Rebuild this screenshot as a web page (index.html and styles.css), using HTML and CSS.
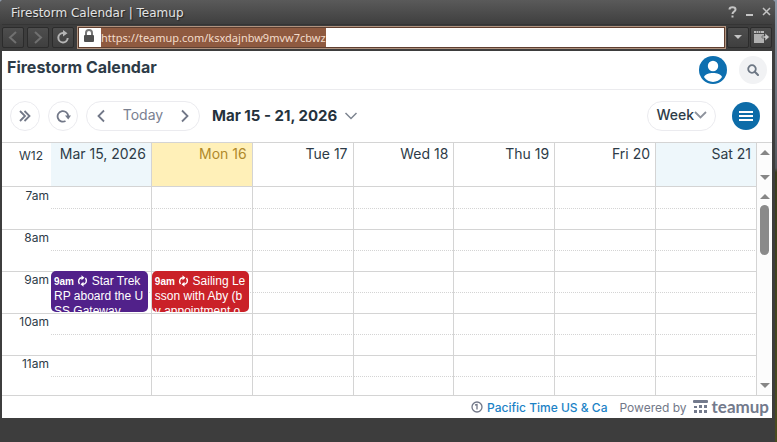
FILE: index.html
```html
<!DOCTYPE html>
<html lang="en">
<head>
    <meta charset="UTF-8">
    <meta name="viewport" content="width=device-width, initial-scale=1.0">
    <title>Firestorm Calendar | Teamup</title>
    <link rel="stylesheet" href="styles.css">
</head>
<body>
    <div class="window">
        <!-- Viewer window frame -->
        <div class="titlebar">
            <span class="titlebar-text">Firestorm Calendar | Teamup</span>
            <button class="win-btn" aria-label="Help">
                <svg width="9" height="12" viewBox="0 0 9 12"><path d="M1.500 3.500C1.500 0.500 7.500 0.500 7.500 3.500C7.500 5.500 4.500 5.500 4.500 8M4.500 9.500V11.500" fill="none" stroke="#c4c4c4" stroke-width="2"/></svg>
            </button>
            <button class="win-btn" aria-label="Minimize">
                <svg width="9" height="12" viewBox="0 0 9 12"><path d="M1 9H8" stroke="#c4c4c4" stroke-width="2"/></svg>
            </button>
            <button class="win-btn" aria-label="Close">
                <svg width="9" height="12" viewBox="0 0 9 12"><path d="M1 2L8 9M8 2L1 9" stroke="#c4c4c4" stroke-width="1.500"/></svg>
            </button>
        </div>

        <div class="navbar">
            <div class="nav-group">
                <button class="nav-btn" aria-label="Back">
                    <svg width="12" height="14" viewBox="0 0 12 14"><path d="M9 2L3 7.500L9 13" fill="none" stroke="#707070" stroke-width="2"/></svg>
                </button>
                <button class="nav-btn" aria-label="Forward">
                    <svg width="12" height="14" viewBox="0 0 12 14"><path d="M3 2L9 7.500L3 13" fill="none" stroke="#707070" stroke-width="2"/></svg>
                </button>
                <button class="nav-btn" aria-label="Reload">
                    <svg width="14" height="14" viewBox="0 0 14 14"><path d="M7.500 3H7A4.700 4.700 0 1 0 11.700 8" fill="none" stroke="#b5b5b5" stroke-width="2"/><path d="M7 0L11.500 3.200L7 6.500Z" fill="#b5b5b5"/></svg>
                </button>
            </div>
            <div class="address">
                <svg class="lock" width="12" height="14" viewBox="0 0 12 14"><path d="M3 7V4A3 3 0 0 1 9 4V7" fill="none" stroke="#777" stroke-width="2"/><rect x="1" y="6" width="10" height="7" rx="1" fill="#505050"/></svg>
                <input class="url" type="text" aria-label="Address" value="https://teamup.com/ksxdajnbw9mvw7cbwz">
            </div>
            <div class="nav-group nav-end">
                <button class="nav-btn" aria-label="History">
                    <svg width="10" height="6" viewBox="0 0 10 6"><path d="M1 1H9L5 5Z" fill="#c4c4c4"/></svg>
                </button>
                <button class="nav-btn" aria-label="Open in external browser">
                    <svg width="17" height="14" viewBox="0 0 17 14"><rect x="1" y="1" width="10" height="2" fill="#b8b8b8"/><path d="M3 2H4M5 2H6M7 2H8" stroke="#444"/><rect x="1" y="4" width="10" height="9" fill="#b0b0b0"/><path d="M9 6H12V3L16.500 7L12 11V8H9Z" fill="#c8c8c8" stroke="#484848" stroke-width="0.600"/></svg>
                </button>
            </div>
        </div>

        <div class="page">
            <header class="header">
                <h1>Firestorm Calendar</h1>
                <button class="avatar" aria-label="Account">
                    <svg width="28" height="28" viewBox="0 0 28 28"><circle cx="14" cy="14" r="14" fill="#0d6fb0"/><circle cx="14" cy="10" r="5.200" fill="#fff"/><path d="M5 21C7 15.800 21 15.800 23 21C18.500 27.500 9.500 27.500 5 21Z" fill="#fff"/></svg>
                </button>
                <button class="search" aria-label="Search">
                    <svg width="12" height="12" viewBox="0 0 12 12"><circle cx="5" cy="5" r="3.800" fill="none" stroke="#6d7784" stroke-width="1.800"/><path d="M7.800 7.800L11 11" stroke="#6d7784" stroke-width="2" stroke-linecap="round"/></svg>
                </button>
            </header>

            <div class="toolbar">
                <button class="round" aria-label="Show sidebar">
                    <svg width="14" height="14" viewBox="0 0 14 14"><path d="M2 2L7 7L2 12M6.500 2L11.500 7L6.500 12" fill="none" stroke="#727888" stroke-width="1.800"/></svg>
                </button>
                <button class="round" aria-label="Refresh">
                    <svg width="15" height="14" viewBox="0 0 15 14"><path d="M9.500 12A5.300 5.300 0 1 1 12.200 7.500" fill="none" stroke="#727888" stroke-width="1.800"/><path d="M9 6.500H15L12.200 10.500Z" fill="#727888"/></svg>
                </button>
                <div class="pager">
                    <button aria-label="Previous week">
                        <svg width="10" height="14" viewBox="0 0 10 14"><path d="M8 1.500L2.500 7L8 12.500" fill="none" stroke="#727888" stroke-width="1.800"/></svg>
                    </button>
                    <button class="today-btn">Today</button>
                    <button aria-label="Next week">
                        <svg width="10" height="14" viewBox="0 0 10 14"><path d="M2 1.500L7.500 7L2 12.500" fill="none" stroke="#727888" stroke-width="1.800"/></svg>
                    </button>
                </div>
                <button class="range">
                    Mar 15 - 21, 2026
                    <svg width="14" height="8" viewBox="0 0 14 8"><path d="M1.500 1L7 6.500L12.500 1" fill="none" stroke="#7d8490" stroke-width="1.500"/></svg>
                </button>
                <button class="view">
                    Week
                    <svg width="14" height="8" viewBox="0 0 14 8"><path d="M1 1L6.500 6.500L12 1" fill="none" stroke="#8d929c" stroke-width="1.800"/></svg>
                </button>
                <button class="menu" aria-label="Menu">
                    <svg width="14" height="12" viewBox="0 0 14 12"><path d="M0 2H14M0 6H14M0 10H14" stroke="#fff" stroke-width="2"/></svg>
                </button>
            </div>

            <div class="calendar">
                <table class="week">
                    <thead>
                        <tr>
                            <th class="week-no" scope="col">W12</th>
                            <th class="weekend" scope="col">Mar 15, 2026</th>
                            <th class="today" scope="col">Mon 16</th>
                            <th scope="col">Tue 17</th>
                            <th scope="col">Wed 18</th>
                            <th scope="col">Thu 19</th>
                            <th scope="col">Fri 20</th>
                            <th class="weekend" scope="col">Sat 21</th>
                        </tr>
                    </thead>
                    <tbody>
                        <tr><th scope="row">7am</th><td></td><td></td><td></td><td></td><td></td><td></td><td></td></tr>
                        <tr><th scope="row">8am</th><td></td><td></td><td></td><td></td><td></td><td></td><td></td></tr>
                        <tr>
                            <th scope="row">9am</th>
                            <td>
                                <div class="event purple"><b>9am</b> <svg width="11" height="12" viewBox="0 0 11 12"><path d="M2.500 9C0.500 6 2 2.800 5 2.800M8.500 3C10.500 6 9 9.200 6 9.200" fill="none" stroke="#fff" stroke-width="1.400"/><path d="M4.500 0.300L7.500 2.800L4.500 5.300ZM6.500 6.700L3.500 9.200L6.500 11.700Z" fill="#fff"/></svg> Star Trek RP aboard the USS Gateway</div>
                            </td>
                            <td>
                                <div class="event red"><b>9am</b> <svg width="11" height="12" viewBox="0 0 11 12"><path d="M2.500 9C0.500 6 2 2.800 5 2.800M8.500 3C10.500 6 9 9.200 6 9.200" fill="none" stroke="#fff" stroke-width="1.400"/><path d="M4.500 0.300L7.500 2.800L4.500 5.300ZM6.500 6.700L3.500 9.200L6.500 11.700Z" fill="#fff"/></svg> Sailing Lesson with Aby (by appointment o</div>
                            </td>
                            <td></td><td></td><td></td><td></td><td></td>
                        </tr>
                        <tr><th scope="row">10am</th><td></td><td></td><td></td><td></td><td></td><td></td><td></td></tr>
                        <tr><th scope="row">11am</th><td></td><td></td><td></td><td></td><td></td><td></td><td></td></tr>
                    </tbody>
                </table>
                <div class="scrollbars">
                    <div class="scroll scroll-head">
                        <span class="arrow-up"></span>
                        <span class="arrow-down"></span>
                    </div>
                    <div class="scroll scroll-body">
                        <span class="arrow-up"></span>
                        <span class="thumb"></span>
                        <span class="arrow-down"></span>
                    </div>
                </div>
            </div>

            <footer class="footer">
                <a class="timezone" href="#">
                    <svg width="12" height="12" viewBox="0 0 12 12"><circle cx="6" cy="6" r="5" fill="none" stroke="#727888" stroke-width="1.300"/><path d="M4 4L6 3.500V8.500" fill="none" stroke="#727888" stroke-width="1.300"/></svg>
                    Pacific Time US &amp; Ca
                </a>
                <span>Powered by</span>
                <a class="brand" href="#">
                    <svg width="15" height="14" viewBox="0 0 15 14" fill="#737a8c"><rect x="0" y="0" width="15" height="3" rx="1"/><rect x="6" y="5" width="3" height="3"/><rect x="11" y="5" width="3" height="3"/><rect x="1" y="6" width="3" height="2"/><rect x="1" y="10" width="3" height="3"/><rect x="6" y="10" width="3" height="3"/><rect x="11" y="10" width="3" height="3"/></svg>
                    teamup
                </a>
            </footer>
        </div>
    </div>
</body>
</html>
```

FILE: styles.css
```css
* {
    box-sizing: border-box;
}
body {
    margin: 0;
    padding-right: 2px;
    background: linear-gradient(#8d99a8, #55585c 38%, #3b3d1c 39%, #4a4c20);
    font-family: Inter, sans-serif;
    color: #2d3b47;
}
button {
    display: flex;
    align-items: center;
    justify-content: center;
    margin: 0;
    padding: 0;
    border: 0;
    background: none;
    font: inherit;
    color: inherit;
    cursor: pointer;
}
svg {
    flex: none;
}
.window {
    display: flex;
    flex-direction: column;
    height: 100vh;
    padding: 0 3px 24px 2px;
    background-color: #3d3d3d;
    border-radius: 4px 4px 0 0;
    overflow: hidden;
}

/* window frame */
.titlebar {
    display: flex;
    align-items: center;
    gap: 8px;
    height: 24px;
    margin: 0 -3px 0 -2px;
    padding: 0 4px 0 11px;
    background: linear-gradient(#5a5a5a, #3f3f3f);
    font: 12px "DejaVu Sans", sans-serif;
    color: #e4e4e4;
    text-shadow: 1px 1px 1px #222;
}
.titlebar-text {
    flex: 1;
    padding-top: 2px;
}
.win-btn {
    width: 9px;
}
.navbar {
    display: flex;
    align-items: center;
    height: 27px;
    padding: 1px 0 3px;
    border-top: 1px solid #353535;
}
.nav-group {
    display: flex;
    gap: 3px;
    padding-right: 3px;
}
.nav-end {
    gap: 1px;
    padding: 0 0 0 1px;
}
.nav-btn {
    width: 22px;
    height: 21px;
    border: 1px solid #2c2c2c;
    border-radius: 2px;
    background: linear-gradient(#4e4e4e, #3f3f3f);
}
.address {
    display: flex;
    flex: 1;
    align-items: center;
    height: 23px;
    border: 1px solid #b0937f;
    outline: 1px solid #5f3f30;
    outline-offset: -2px;
    padding: 1px;
    background-color: #fff;
}
.lock {
    margin: 0 6px 2px 4px;
}
.url {
    field-sizing: content;
    height: 19px;
    border: 0;
    padding: 0;
    background-color: #8f5a40;
    font: 11px "Noto Sans", sans-serif;
    color: #f3dccb;
}

/* calendar page */
.page {
    display: flex;
    flex: 1;
    flex-direction: column;
    min-height: 0;
    background-color: #fff;
}
.header {
    display: flex;
    align-items: center;
    gap: 12px;
    height: 39px;
    padding: 0 5px;
    border-bottom: 1px solid #ebebee;
}
h1 {
    flex: 1;
    margin: 0;
    padding-bottom: 6px;
    font-size: 16px;
    font-weight: 700;
}
.search {
    width: 28px;
    height: 28px;
    border-radius: 50%;
    background-color: #f1f2f4;
}
.toolbar {
    display: flex;
    align-items: center;
    gap: 8px;
    height: 53px;
    padding: 0 12px 1px 8px;
    border-bottom: 1px solid #d4d4d4;
}
.round {
    width: 30px;
    height: 30px;
    border: 1px solid #ebebef;
    border-radius: 50%;
}
.pager {
    display: flex;
    justify-content: space-between;
    width: 114px;
    height: 30px;
    padding: 0 9px;
    border: 1px solid #ebebef;
    border-radius: 15px;
}
.today-btn {
    padding-bottom: 2px;
    font-size: 14px;
    color: #7a8090;
}
.range {
    gap: 7px;
    margin: 0 auto 0 4px;
    font-size: 15px;
    font-weight: 700;
    color: #25323c;
}
.view {
    height: 30px;
    padding: 0 7px 2px 8px;
    border: 1px solid #ebebef;
    border-radius: 15px;
    font-size: 14px;
    font-weight: 500;
}
.menu {
    width: 28px;
    height: 28px;
    margin-left: 8px;
    border-radius: 50%;
    background-color: #0d6ca8;
}
.calendar {
    display: flex;
    flex: 1;
    min-height: 0;
    overflow: hidden;
    border-bottom: 1px solid #d4d4d4;
}
.week {
    width: calc(100% - 15px);
    height: 254px;
    table-layout: fixed;
    border-collapse: separate;
    border-spacing: 0;
}
th,
td {
    padding: 0;
    vertical-align: top;
    font-weight: 400;
    text-align: right;
}
thead th {
    height: 44px;
    padding: 2px 5px 0 0;
    border-right: 1px solid #d4d4d4;
    border-bottom: 1px solid #d4d4d4;
    font-size: 14px;
    line-height: 17px;
}
thead .week-no {
    width: 49px;
    padding: 4px 8px 0 0;
    border-right: 0;
    font-size: 12px;
}
.weekend {
    background-color: #eef7fb;
}
.today {
    background-color: #fff0b8;
    color: #b0892a;
}
tbody th,
tbody td {
    height: 42px;
    border-top: 1px solid #d4d4d4;
}
tbody tr:first-child th,
tbody tr:first-child td {
    border-top: 0;
}
tbody th {
    padding: 0 2px 0 0;
    font-size: 12px;
    line-height: 16px;
}
tbody tr:first-child th {
    padding-top: 1px;
}
tbody td {
    border-right: 1px solid #d4d4d4;
    background: repeating-linear-gradient(90deg, #d4d4d4 0 1px, transparent 1px 2px) 0 20px / 100% 1px no-repeat;
}
tbody tr:first-child td {
    background-position: 0 21px;
}
.event {
    height: 41px;
    margin: -1px 3px 0 0;
    padding: 3px 2px 0 3px;
    border-radius: 5px;
    overflow: hidden;
    font: 12px/15px "Liberation Sans", sans-serif;
    color: #fff;
    text-align: left;
    word-break: break-all;
    line-break: anywhere;
}
.event b {
    font-size: 10px;
    line-height: 10px;
}
.event svg {
    vertical-align: -2px;
}
.purple {
    background-color: #51218a;
}
.red {
    background-color: #ca2128;
}

/* scrollbars */
.scrollbars {
    display: flex;
    flex-direction: column;
    width: 15px;
    background-color: #fcfcfc;
}
.scroll {
    display: flex;
    flex-direction: column;
    align-items: center;
    padding: 7px 0;
}
.scroll-head {
    height: 44px;
}
.scroll-body {
    flex: 1;
}
.arrow-up,
.arrow-down {
    border: 5px solid transparent;
}
.arrow-up {
    border-top: 0;
    border-bottom-color: #868686;
}
.arrow-down {
    margin-top: auto;
    border-bottom: 0;
    border-top-color: #868686;
}
.thumb {
    width: 9px;
    height: 50px;
    margin-top: 6px;
    border-radius: 5px;
    background-color: #8a8a8a;
}

.footer {
    display: flex;
    align-items: center;
    justify-content: flex-end;
    gap: 12px;
    height: 22px;
    padding-right: 3px;
    font-size: 12px;
    color: #727888;
}
.footer a {
    display: flex;
    align-items: center;
    text-decoration: none;
}
.timezone {
    gap: 4px;
    font-weight: 500;
    color: #1c82c6;
}
.footer .brand {
    gap: 4px;
    margin-left: -6px;
    font: 700 17px/20px Lato, sans-serif;
    color: #737a8c;
}
```
